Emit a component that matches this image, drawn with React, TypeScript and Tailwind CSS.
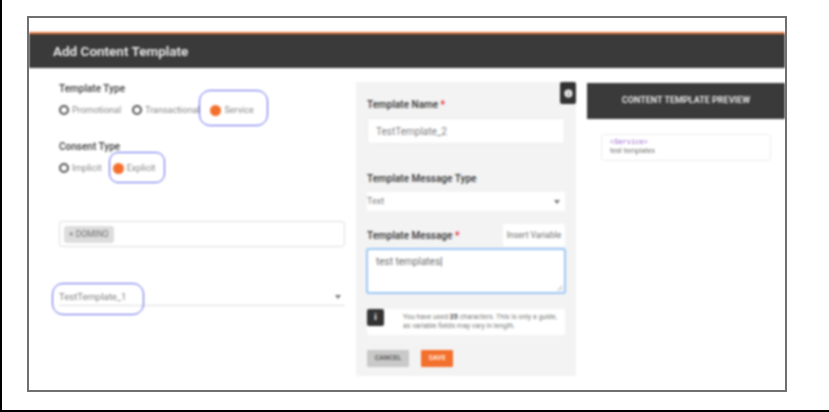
import { Info } from "lucide-react";

function Caret({ className }: { className?: string }) {
  return (
    <svg width="6" height="4" viewBox="0 0 6 4" className={className}>
      <path d="M0 0h6L3 4z" fill="#777" />
    </svg>
  );
}

function Radio({ label, checked }: { label: string; checked?: boolean }) {
  return (
    <div className="flex items-center gap-[3px]">
      {checked ? (
        <span className="h-[11px] w-[11px] rounded-full bg-[#f36f2c]" />
      ) : (
        <span className="h-[10px] w-[10px] rounded-full border-2 border-[#555555] bg-white" />
      )}
      <span className="text-[9px] leading-none text-[#858585]">{label}</span>
    </div>
  );
}

export default function App() {
  return (
    <div className="h-[412px] w-[829px] overflow-hidden bg-white font-['Roboto',sans-serif]">
      <div className="h-[412px] w-[829px] border-b-2 border-l-2 border-black pl-[25px] pt-4">
        <div className="h-[376px] w-[760px] overflow-hidden border-2 border-[#707070] bg-white pt-[14px]">
          <div className="blur-[0.8px]">
            {/* Header */}
            <div className="flex h-[36px] items-center border-t-2 border-[#e8783e] bg-[#3a3a3a] pl-6">
              <span className="text-[13.5px] font-semibold text-[#efefef]">Add Content Template</span>
            </div>

            <div className="flex">
              {/* Left column */}
              <div className="w-[327px] pl-[30px] pr-[11px] pt-[15px]">
                <div className="text-[10px] font-semibold leading-3 text-[#4a4a4a]">Template Type</div>
                <div className="relative mt-[9px] flex h-[12px] items-center gap-[11px]">
                  <Radio label="Promotional" />
                  <Radio label="Transactional" />
                  <Radio label="Service" checked />
                  <div className="absolute left-[140px] top-[-14px] h-[36px] w-[69px] rounded-[11px] border-[1.5px] border-[#5f66ea]" />
                </div>
                <div className="mt-[25px] text-[10px] font-semibold leading-3 text-[#4a4a4a]">Consent Type</div>
                <div className="relative mt-[9px] flex h-[12px] items-center gap-[11px]">
                  <Radio label="Implicit" />
                  <Radio label="Explicit" checked />
                  <div className="absolute left-[50px] top-[-10px] h-[31px] w-[56px] rounded-[9px] border-[1.5px] border-[#5f66ea]" />
                </div>

                <div className="mt-[47px] flex h-[26px] items-center rounded-[3px] border border-[#dddddd] px-[4px]">
                  <span className="rounded-[3px] bg-[#dddddd] px-[5px] py-[3px] text-[8.5px] leading-[11px] text-[#6f6f6f]">
                    × DOMINO
                  </span>
                </div>

                <div className="relative mt-[36px] flex h-[23px] items-center justify-between border-b border-[#dddddd] pr-1 pt-[6px]">
                  <span className="text-[9.5px] text-[#7d7d7d]">TestTemplate_1</span>
                  <Caret />
                  <div className="absolute left-[-7px] top-0 h-[32px] w-[92px] rounded-[11px] border-[1.5px] border-[#5f66ea]" />
                </div>
              </div>

              {/* Form panel */}
              <div className="relative mt-[14px] h-[294px] w-[220px] bg-[#f3f3f3] px-[11px] pt-[17px]">
                <div className="absolute right-0 top-0 flex h-[22px] w-[16px] items-center justify-center rounded-[2px] bg-[#333333]">
                  <Info size={11} color="#333333" fill="#eeeeee" />
                </div>
                <div className="text-[10px] font-semibold leading-3 text-[#444444]">
                  Template Name <span className="text-[#e5202e]">*</span>
                </div>
                <div className="mt-[7px] flex h-[26px] items-center rounded-[2px] border border-[#ececec] bg-white pl-[8px] text-[10px] text-[#7f7f7f]">
                  TestTemplate_2
                </div>
                <div className="mt-[29px] text-[10px] font-semibold leading-3 text-[#444444]">Template Message Type</div>
                <div className="mt-[7px] flex h-[19px] items-center justify-between bg-white pr-[5px] text-[9px] text-[#808080]">
                  Text
                  <Caret />
                </div>
                <div className="mt-[13px] flex h-[24px] items-center justify-between">
                  <div className="text-[10px] font-semibold leading-3 text-[#444444]">
                    Template Message <span className="text-[#e5202e]">*</span>
                  </div>
                  <div className="flex h-[22px] w-[62px] items-center justify-center self-start rounded-[2px] bg-white text-[8.5px] text-[#6f6f6f]">
                    Insert Variable
                  </div>
                </div>
                <div className="relative ml-[-1px] h-[46px] w-[200px] rounded-[3px] border-2 border-[#9cc7f5] bg-white pl-[8px] pt-[4px] text-[10px] leading-[15px] text-[#6f6f6f]">
                  test templates<span className="text-[#444444]">|</span>
                  <svg width="6" height="6" viewBox="0 0 6 6" className="absolute bottom-[1px] right-[1px]">
                    <path d="M0.5 5.5 5.5 0.5M3 5.5 5.5 3" stroke="#999" strokeWidth="0.8" />
                  </svg>
                </div>
                <div className="relative mt-[15px] flex h-[26px] items-center whitespace-nowrap rounded-[2px] bg-white pl-[36px] text-[7px] leading-[9.5px] text-[#7a7a7a]">
                  <span>
                    You have used <b className="text-[#444444]">25</b> characters. This is only a guide,
                    <br />
                    as variable fields may vary in length.
                  </span>
                  <div className="absolute left-0 top-0 flex h-[17px] w-[17px] items-center justify-center rounded-[2px] bg-[#333333] text-[9px] font-bold text-white">
                    i
                  </div>
                </div>
                <div className="mt-[15px] flex gap-3">
                  <div className="flex h-[17px] w-[42px] items-center justify-center rounded-[1px] bg-[#c9c9c9] text-[7px] font-bold text-[#666666]">
                    CANCEL
                  </div>
                  <div className="flex h-[17px] w-[32px] items-center justify-center rounded-[1px] bg-[#f36f2c] text-[7px] font-bold text-[#ffe9dc]">
                    SAVE
                  </div>
                </div>
              </div>

              {/* Preview */}
              <div className="ml-[11px] mt-[15px] w-[198px]">
                <div className="flex h-[36px] items-center justify-center bg-[#3a3a3a] text-[9px] font-bold text-[#e6e6e6]">
                  CONTENT TEMPLATE PREVIEW
                </div>
                <div className="ml-[14px] mt-[15px] h-[27px] w-[170px] rounded-[3px] border border-[#eeeeee] pl-2 pt-[3px] text-[7px] leading-[9px] text-[#6f6f6f]">
                  <div className="font-['Liberation_Mono',monospace] text-[#9a63cf]">&lt;Service&gt;</div>
                  <div>test templates</div>
                </div>
              </div>
            </div>
          </div>
        </div>
      </div>
    </div>
  );
}
